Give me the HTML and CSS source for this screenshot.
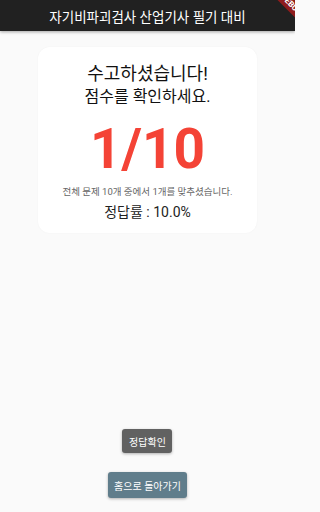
FILE: index.html
```html
<!DOCTYPE html>
<html lang="ko">
<head>
<meta charset="utf-8">
<title>결과</title>
<link rel="stylesheet" href="styles.css">
</head>
<body>
<div class="page">
  <header class="appbar">자기비파괴검사 산업기사 필기 대비</header>
  <div class="banner"><span>DEBUG</span></div>
  <main class="content">
    <section class="card">
      <p class="title">수고하셨습니다!</p>
      <p class="subtitle">점수를 확인하세요.</p>
      <p class="score">1/10</p>
      <p class="detail">전체 문제 10개 중에서 1개를 맞추셨습니다.</p>
      <p class="rate">정답률 : 10.0%</p>
    </section>
    <div class="actions">
      <button class="btn btn-check">정답확인</button>
      <button class="btn btn-home">홈으로 돌아가기</button>
    </div>
  </main>
</div>
</body>
</html>
```

FILE: styles.css
```css
* { box-sizing: border-box; }
html, body {
  margin: 0;
  padding: 0;
  background: #fafafa;
  font-family: Roboto, "Noto Sans CJK KR", sans-serif;
}
.page {
  position: relative;
  width: 295px;
  height: 512px;
  overflow: hidden;
  display: flex;
  flex-direction: column;
}
.appbar {
  height: 31px;
  flex: none;
  background: #212121;
  color: #fff;
  font-size: 13.5px;
  display: flex;
  align-items: center;
  justify-content: center;
  box-shadow: 0 1px 3px rgba(0,0,0,0.35);
  position: relative;
  z-index: 1;
}
.banner {
  position: absolute;
  left: 241px;
  top: -1.5px;
  width: 100px;
  height: 12px;
  background: #8e1c1c;
  transform: rotate(45deg);
  z-index: 2;
  display: flex;
  align-items: center;
  justify-content: center;
}
.banner span {
  color: #fff;
  font-size: 8px;
  font-weight: 700;
  line-height: 12px;
}
.content {
  flex: 1;
  display: flex;
  flex-direction: column;
  align-items: center;
  padding-top: 16px;
}
.card {
  width: 219px;
  height: 186px;
  background: #fff;
  border-radius: 12px;
  box-shadow: 0 0 2px rgba(0,0,0,0.04);
  display: flex;
  flex-direction: column;
  align-items: center;
  padding-top: 16px;
}
.card p { margin: 0; text-align: center; }
.title {
  font-size: 18px;
  line-height: 22px;
  color: #111;
}
.subtitle {
  font-size: 16px;
  line-height: 20px;
  color: #111;
  margin-top: 2px !important;
}
.score {
  font-size: 55px;
  font-weight: 700;
  line-height: 60px;
  color: #f44336;
  margin-top: 12px !important;
}
.detail {
  font-size: 9.5px;
  line-height: 14px;
  color: #666;
  margin-top: 6px !important;
}
.rate {
  font-size: 14px;
  line-height: 18px;
  color: #222;
  margin-top: 4px !important;
}
.actions {
  margin-top: auto;
  display: flex;
  flex-direction: column;
  align-items: center;
  gap: 19px;
  padding-bottom: 14px;
}
.btn {
  border: none;
  color: #fff;
  font-family: Roboto, "Noto Sans CJK KR", sans-serif;
  font-size: 10px;
  border-radius: 3px;
  box-shadow: 0 1px 3px rgba(0,0,0,0.3);
  padding: 0 6px;
}
.btn-check {
  height: 24px;
  background: #616161;
  min-width: 50px;
}
.btn-home {
  height: 26px;
  background: #607d8b;
}
```
